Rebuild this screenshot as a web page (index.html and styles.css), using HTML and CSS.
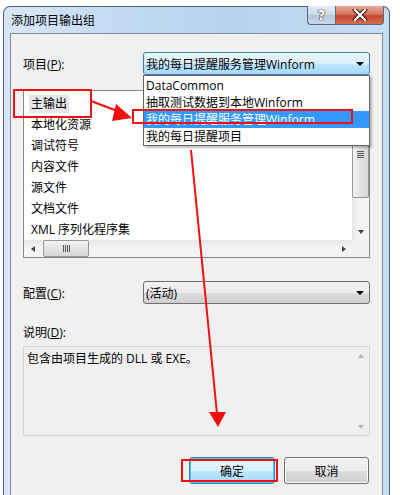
FILE: index.html
```html
<!DOCTYPE html>
<html lang="zh-CN">
<head>
  <meta charset="UTF-8">
  <title>添加项目输出组</title>
  <link rel="stylesheet" href="styles.css">
</head>
<body>
  <div class="window">
    <!-- Title bar -->
    <div class="titlebar">
      <span class="title">添加项目输出组</span>
      <div class="caption-buttons">
        <div class="cap-btn help">?</div>
        <div class="cap-btn close">
          <svg width="16" height="12" viewBox="0 0 16 12">
            <path d="M3 1 L13 11 M13 1 L3 11" stroke="#3a1a14" stroke-width="4.4" stroke-linecap="round"/>
            <path d="M3 1 L13 11 M13 1 L3 11" stroke="#fff" stroke-width="2.4" stroke-linecap="round"/>
          </svg>
        </div>
      </div>
    </div>

    <!-- Client area -->
    <div class="client">
      <div class="field-row">
        <label class="field-label">项目(<u>P</u>):</label>
        <div class="combo active">
          <span>我的每日提醒服务管理Winform</span>
          <i class="combo-arrow"></i>
        </div>
      </div>

      <div class="listbox">
        <div class="list-items">
          <div class="item"><span class="sel">主输出</span></div>
          <div class="item"><span>本地化资源</span></div>
          <div class="item"><span>调试符号</span></div>
          <div class="item"><span>内容文件</span></div>
          <div class="item"><span>源文件</span></div>
          <div class="item"><span>文档文件</span></div>
          <div class="item"><span>XML 序列化程序集</span></div>
        </div>
        <div class="vscroll">
          <div class="sb-btn"><i class="tri up"></i></div>
          <div class="vthumb"><i class="grip-v"></i></div>
          <div class="sb-track"></div>
          <div class="sb-btn"><i class="tri down"></i></div>
        </div>
        <div class="hscroll">
          <div class="sb-btn"><i class="tri left"></i></div>
          <div class="hthumb"><i class="grip-h"></i></div>
          <div class="sb-track"></div>
          <div class="sb-btn"><i class="tri right"></i></div>
        </div>
        <div class="sb-corner"></div>
      </div>

      <div class="field-row config-row">
        <label class="field-label">配置(<u>C</u>):</label>
        <div class="combo">
          <span>(活动)</span>
          <i class="combo-arrow"></i>
        </div>
      </div>

      <div class="desc-label">说明(<u>D</u>):</div>
      <div class="desc-box">
        <div class="desc-text">包含由项目生成的 DLL 或 EXE。</div>
        <div class="vscroll disabled">
          <div class="sb-btn"><i class="tri up"></i></div>
          <div class="sb-track"></div>
          <div class="sb-btn"><i class="tri down"></i></div>
        </div>
      </div>

      <div class="buttons">
        <button class="btn default">确定</button>
        <button class="btn">取消</button>
      </div>
    </div>
  </div>

  <!-- Dropdown popup of the project combo -->
  <div class="dropdown">
    <div class="dd-item">DataCommon</div>
    <div class="dd-item">抽取测试数据到本地Winform</div>
    <div class="dd-item selected">我的每日提醒服务管理Winform</div>
    <div class="dd-item">我的每日提醒项目</div>
  </div>

  <!-- Red annotations -->
  <svg class="marks" width="400" height="495" viewBox="0 0 400 495">
    <g fill="none" stroke="#f01010" stroke-width="2">
      <rect x="14" y="90" width="77" height="27"/>
      <rect x="133" y="110" width="219" height="13"/>
      <rect x="182" y="460" width="95" height="21"/>
      <line x1="91" y1="101" x2="120" y2="112"/>
      <line x1="191" y1="150" x2="217" y2="414"/>
    </g>
    <g fill="#f01010">
      <polygon points="116,104 132,118 112,121"/>
      <polygon points="209,412 226,412 218,427"/>
    </g>
  </svg>
</body>
</html>
```

FILE: styles.css
```css
body {
  margin: 0;
  width: 400px;
  height: 495px;
  overflow: hidden;
  position: relative;
  background: #fff;
  font-family: "Open Sans", "Noto Sans CJK SC", sans-serif;
  font-size: 12px;
  color: #000;
}
.window {
  margin: 6px 0 0 3px;
  width: 387px;
  height: 489px;
  box-sizing: border-box;
  border: 1px solid #4e5e70;
  border-bottom: none;
  border-radius: 7px 7px 0 0;
  padding: 0 6px;
  background: linear-gradient(to right, #d9e8f7 0%, #c2daf2 30%, #b6d3ef 60%, #c7ddf3 100%);
}
.titlebar {
  height: 26px;
  display: flex;
  justify-content: space-between;
  align-items: flex-start;
}
.title {
  padding: 6px 0 0 1px;
  line-height: 16px;
}
.caption-buttons {
  display: flex;
  margin: -1px -1px 0 0;
}
.cap-btn {
  height: 18px;
  border: 1px solid #5b6b7d;
  border-top: none;
  display: flex;
  align-items: center;
  justify-content: center;
}
.help {
  width: 27px;
  border-right: none;
  border-radius: 0 0 0 4px;
  background: linear-gradient(#e4ecf5, #cad8e6 50%, #b7c8da 51%, #c9d8e8);
  color: #fff;
  font-family: "DejaVu Sans", sans-serif;
  font-weight: bold;
  font-size: 14px;
  text-shadow: 0 0 1px #333, 0 0 1px #333, 0 0 1px #333;
}
.close {
  width: 47px;
  border-radius: 0 0 4px 0;
  background: linear-gradient(#e9a99c, #d7735f 45%, #c7432b 55%, #d66e55);
}
.client {
  border: 1px solid #7b8c9e;
  border-bottom: none;
  background: #f0f0f0;
  height: 462px;
  box-sizing: border-box;
  padding: 18px 12px 0;
}
.field-row {
  display: flex;
  height: 23px;
}
.field-label {
  width: 120px;
  padding-top: 4px;
  line-height: 17px;
}
.combo {
  flex: 1;
  display: flex;
  align-items: center;
  justify-content: space-between;
  padding: 0 5px 0 2px;
  border: 1px solid #707070;
  border-radius: 3px;
  background: linear-gradient(#f2f2f2 0%, #ebebeb 50%, #dddddd 51%, #cfcfcf 100%);
}
.combo.active {
  border-color: #3c7fb1;
  background: linear-gradient(#eaf6fd 0%, #d9f0fc 50%, #bee6fd 51%, #a7d9f5 100%);
}
.combo-arrow {
  width: 0;
  height: 0;
  border-left: 4px solid transparent;
  border-right: 4px solid transparent;
  border-top: 4px solid #000;
}
.listbox {
  margin-top: 15px;
  height: 168px;
  border: 1px solid #828790;
  box-sizing: border-box;
  background: #fff;
  display: grid;
  grid-template-columns: 1fr 17px;
  grid-template-rows: 1fr 17px;
}
.list-items {
  padding: 2px 0 0 5px;
  overflow: hidden;
}
.item {
  height: 21px;
  display: flex;
  align-items: center;
}
.item span {
  padding: 0 2px;
  line-height: 18px;
}
.item .sel {
  background: #e6e6e6;
}
.vscroll {
  display: flex;
  flex-direction: column;
  background: linear-gradient(to right, #e6e6e6, #f4f4f4 40%, #f4f4f4);
}
.hscroll {
  display: flex;
  background: linear-gradient(#e6e6e6, #f4f4f4 40%, #f4f4f4);
}
.sb-btn {
  width: 17px;
  height: 17px;
  flex: none;
  display: flex;
  align-items: center;
  justify-content: center;
}
.sb-track {
  flex: 1;
}
.sb-corner {
  background: #f0f0f0;
}
.tri {
  width: 0;
  height: 0;
  border: 3px solid transparent;
}
.tri.up {
  border-bottom: 4px solid #444;
  border-top-width: 0;
}
.tri.down {
  border-top: 4px solid #444;
  border-bottom-width: 0;
}
.tri.left {
  border-right: 4px solid #444;
  border-left-width: 0;
}
.tri.right {
  border-left: 4px solid #444;
  border-right-width: 0;
}
.vthumb {
  height: 88px;
  margin: 2px 0 0 0;
  border: 1px solid #979797;
  border-radius: 2px;
  background: linear-gradient(to right, #f5f5f5, #e3e3e3 50%, #d7d7d7);
  display: flex;
  align-items: center;
  justify-content: center;
  flex: none;
  box-sizing: border-box;
}
.hthumb {
  width: 46px;
  margin-left: 2px;
  border: 1px solid #979797;
  border-radius: 2px;
  background: linear-gradient(#f5f5f5, #e3e3e3 50%, #d7d7d7);
  display: flex;
  align-items: center;
  justify-content: center;
  flex: none;
  box-sizing: border-box;
}
.grip-v {
  width: 7px;
  height: 7px;
  background: repeating-linear-gradient(#555 0 1px, transparent 1px 2px);
}
.grip-h {
  width: 7px;
  height: 7px;
  background: repeating-linear-gradient(to right, #555 0 1px, transparent 1px 2px);
}
.config-row {
  margin-top: 23px;
}
.desc-label {
  margin-top: 20px;
  line-height: 17px;
}
.desc-box {
  margin-top: 5px;
  height: 90px;
  border: 1px solid #d5d5d5;
  box-sizing: border-box;
  display: grid;
  grid-template-columns: 1fr 17px;
}
.desc-text {
  padding: 3px 0 0 3px;
  line-height: 17px;
}
.vscroll.disabled {
  background: #f0f0f0;
}
.vscroll.disabled .tri.up {
  border-bottom-color: #b5b5b5;
}
.vscroll.disabled .tri.down {
  border-top-color: #b5b5b5;
}
.buttons {
  margin-top: 21px;
  display: flex;
  justify-content: flex-end;
  gap: 9px;
  padding-right: 1px;
}
.btn {
  width: 85px;
  height: 27px;
  font-family: inherit;
  font-size: 12px;
  color: #000;
  border: 1px solid #707070;
  border-radius: 3px;
  background: linear-gradient(#f2f2f2 0%, #ebebeb 50%, #dddddd 51%, #cfcfcf 100%);
  box-shadow: inset 0 0 0 1px #fbfbfb;
}
.btn.default {
  width: 86px;
  border-color: #3c7fb1;
  background: linear-gradient(#eaf6fd 0%, #d9f0fc 50%, #bee6fd 51%, #a7d9f5 100%);
  box-shadow: inset 0 0 0 1px #48c8f8;
}
.dropdown {
  position: absolute;
  left: 143px;
  top: 75px;
  width: 227px;
  height: 71px;
  box-sizing: border-box;
  border: 1px solid #646464;
  background: #fff;
  padding-top: 1px;
  box-shadow: 2px 2px 2px rgba(0, 0, 0, 0.25);
}
.dd-item {
  height: 17px;
  line-height: 17px;
  padding-left: 2px;
}
.dd-item.selected {
  background: #3399ff;
  color: #fff;
}
.marks {
  position: absolute;
  left: 0;
  top: 0;
  pointer-events: none;
}
```
